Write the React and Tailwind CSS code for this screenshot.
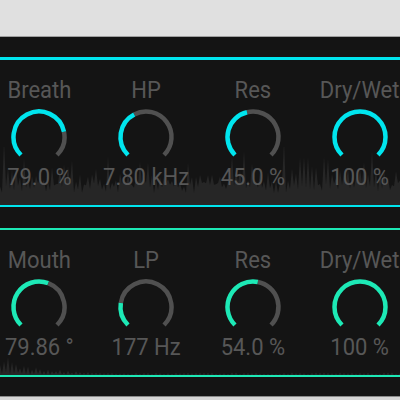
import React from 'react'

// seeded random so the waveform is stable between renders
const rng = (seed) => () => {
  seed |= 0
  seed = (seed + 0x6d2b79f5) | 0
  let t = Math.imul(seed ^ (seed >>> 15), 1 | seed)
  t = (t + Math.imul(t ^ (t >>> 7), 61 | t)) ^ t
  return ((t ^ (t >>> 14)) >>> 0) / 4294967296
}

const wavePath = (seed, width, height, step, peak, valley) => {
  const rand = rng(seed)
  let d = `M0,${height}`
  for (let x = 0; x <= width; x += step) {
    d += ` L${x},${height - peak(x, rand())}`
    d += ` L${x + step / 2},${height - valley(x, rand())}`
  }
  return d + ` L${width},${height} Z`
}

const topWave = wavePath(
  7,
  400,
  58,
  4,
  (x, r) => 18 + r * (26 + 12 * Math.sin(x / 45 + 1)) + (r > 0.85 ? 10 : 0),
  (x, r) => 12 + r * 10
)

const bottomWave = wavePath(
  19,
  400,
  24,
  4,
  (x, r) => (x < 130 ? 1 + (0.4 + 0.6 * r) * 21 * Math.exp(-x / 38) : 1 + r * 1.5),
  (x, r) => (x < 130 ? r * 4 * Math.exp(-x / 40) : 0)
)

const point = (deg, r = 25.5, cx = 30, cy = 30) => {
  const a = (deg * Math.PI) / 180
  return [cx + r * Math.sin(a), cy - r * Math.cos(a)]
}

const arc = (from, to) => {
  const [x1, y1] = point(from)
  const [x2, y2] = point(to)
  const large = to - from > 180 ? 1 : 0
  return `M${x1.toFixed(2)},${y1.toFixed(2)} A25.5,25.5 0 ${large} 1 ${x2.toFixed(2)},${y2.toFixed(2)}`
}

const Knob = ({ label, value, amount, color }) => {
  const end = -135 + 270 * amount
  return (
    <div className="flex flex-col items-center">
      <span className="text-[22px] leading-[26px] scale-y-110 text-[#575757]">{label}</span>
      <svg width="60" height="57" viewBox="0 0 60 57" className="mt-[4px]">
        {amount < 1 && <path d={arc(end, 135)} fill="none" stroke="#505050" strokeWidth="4.5" />}
        <path d={arc(-135, end)} fill="none" stroke={color} strokeWidth="4.5" />
      </svg>
      <span className="text-[22px] leading-[26px] scale-y-110 text-[#575757] whitespace-nowrap">{value}</span>
    </div>
  )
}

const top = [
  { label: 'Breath', value: '79.0 %', amount: 0.79 },
  { label: 'HP', value: '7.80 kHz', amount: 0.398 },
  { label: 'Res', value: '45.0 %', amount: 0.45 },
  { label: 'Dry/Wet', value: '100 %', amount: 1 },
]

const bottom = [
  { label: 'Mouth', value: '79.86 °', amount: 0.578 },
  { label: 'LP', value: '177 Hz', amount: 0.2 },
  { label: 'Res', value: '54.0 %', amount: 0.54 },
  { label: 'Dry/Wet', value: '100 %', amount: 1 },
]

const Panel = ({ knobs, color, wave, waveHeight }) => (
  <div className="relative h-[145px] overflow-hidden">
    <svg
      className="absolute left-0 bottom-0"
      width="400"
      height={waveHeight}
      viewBox={`0 0 400 ${waveHeight}`}
    >
      <path d={wave} fill="#262626" />
    </svg>
    <div className="relative w-[427px] -ml-[14px] pt-[17px] grid grid-cols-4">
      {knobs.map((k) => (
        <Knob key={k.label + k.value} {...k} color={color} />
      ))}
    </div>
  </div>
)

export default function App() {
  return (
    <div className="w-[400px] h-[400px] overflow-hidden bg-[#141414] flex flex-col font-['Roboto',sans-serif]">
      <div className="h-[37px] shrink-0 bg-[#e0e0e0] border-b border-[#9e9e9e]" />
      <div className="mt-[20px] border-t-[3px] border-b-2 border-[#00e5ee]">
        <Panel knobs={top} color="#00e5ee" wave={topWave} waveHeight={58} />
      </div>
      <div className="mt-[21px] border-t-2 border-b-2 border-[#1de9b6]">
        <Panel knobs={bottom} color="#1de9b6" wave={bottomWave} waveHeight={24} />
      </div>
      <div className="mt-[19px] flex-1 bg-[#d6d6d6] border-t border-[#8a8a8a]" />
    </div>
  )
}
